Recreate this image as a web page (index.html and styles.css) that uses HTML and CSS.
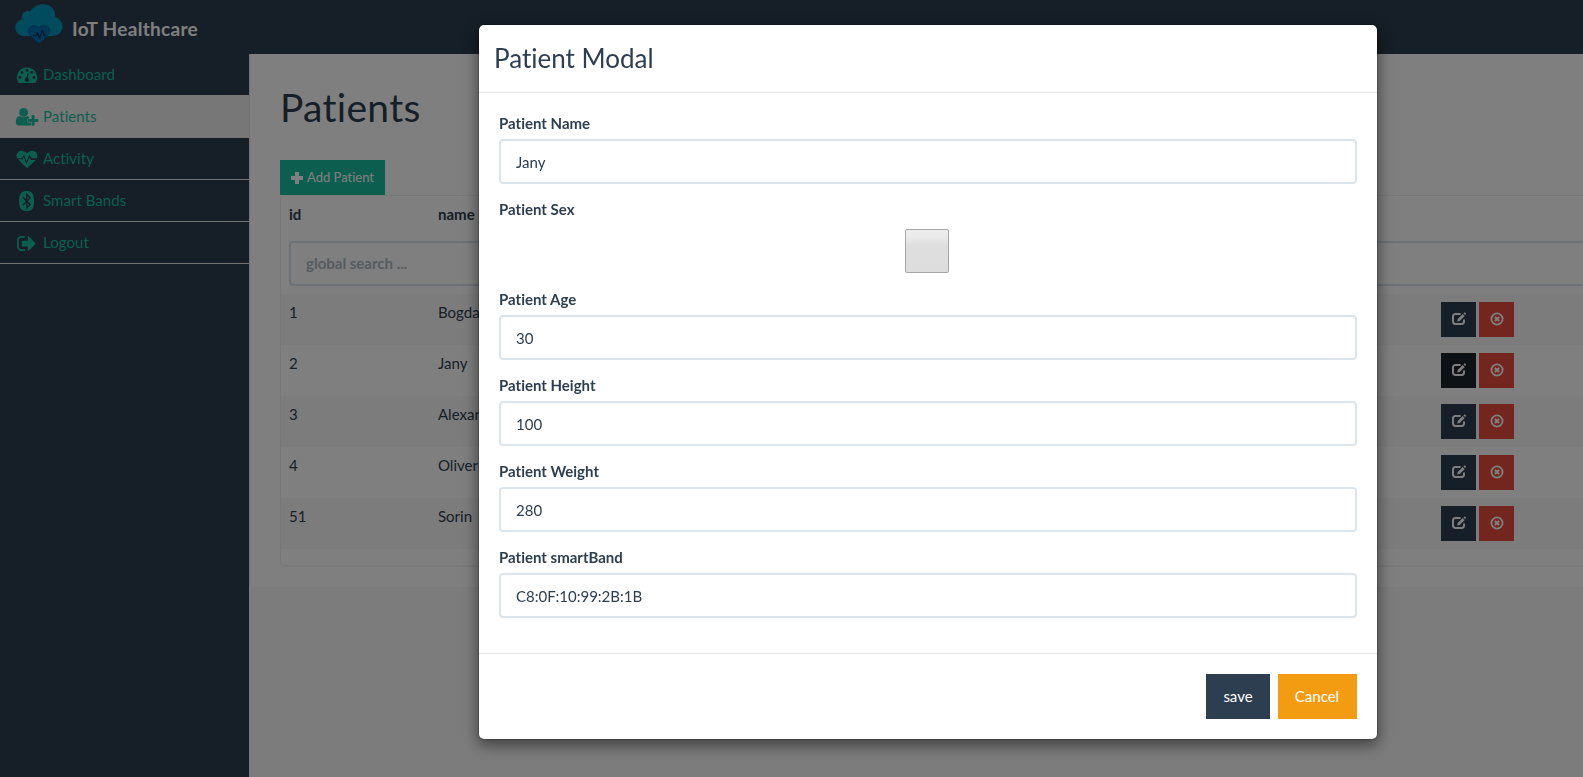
FILE: index.html
```
<!DOCTYPE html>
<html lang="en">
<head>
<meta charset="utf-8">
<title>IoT Healthcare</title>
<link rel="stylesheet" href="styles.css">
</head>
<body>
<svg class="defs" width="0" height="0">
  <symbol id="edit" viewBox="0 0 14 14">
    <path d="M8.600 1.900H3.400A2.400 2.400 0 0 0 1 4.300v5.300A2.400 2.400 0 0 0 3.400 12h6.200A2.400 2.400 0 0 0 12 9.600V7.600" fill="none" stroke="currentColor" stroke-width="2"/>
    <path d="M5.200 9.600l.5-2.500 5-5 2 2-5 5zM11.500 1.400l.9-.9q.3-.3.600 0l1 1q.3.300 0 .6l-.9.900z" fill="currentColor"/>
  </symbol>
  <symbol id="remove" viewBox="0 0 14 14">
    <circle cx="7" cy="7" r="5.600" fill="none" stroke="currentColor" stroke-width="1.800"/>
    <path d="M4.900 4.900l4.200 4.200M9.100 4.900L4.900 9.100" stroke="currentColor" stroke-width="2.100"/>
  </symbol>
</svg>

<header class="topbar">
  <svg class="logo" viewBox="0 0 48 41">
    <path d="M12 32C5 33 .3 28.500.3 23.500.3 19 3.500 16 7 15.500 5.500 10 10 5.500 15.500 7.500 18 2.500 23 .3 28 .3 36 .3 41 6 40.300 13 44.500 14 47.500 18 47.500 22.500 47.500 28.500 42.500 32.500 36 32z" fill="#0097bc"/>
    <path d="M24 39.500L14.900 31.200C11.900 27.500 13.400 22.800 17.200 22 20 21.500 22.600 22.200 24 23.600 25.400 22.200 28 21.500 30.800 22 34.600 22.800 36.100 27.500 33.100 31.200z" fill="#0070b4" stroke="#005c96" stroke-width="1"/>
    <path d="M18 31.500h3l1.500-2.500 2 5 3-7.500 2 5h2" fill="none" stroke="#0a2c48" stroke-width="1.200"/>
  </svg>
  <span class="brand">IoT Healthcare</span>
</header>

<div class="shell">
  <nav class="sidebar">
    <a class="nav-item">
      <svg class="nav-icon" viewBox="0 0 24 24"><path fill-rule="evenodd" d="M12 4.500a10 10 0 0 0-8.700 15q.3.600 1 .6h15.400q.7 0 1-.6A10 10 0 0 0 12 4.500zM5 13a1.400 1.400 0 1 0 0 2.800A1.400 1.400 0 0 0 5 13zM7.100 8a1.400 1.400 0 1 0 0 2.800A1.400 1.400 0 0 0 7.100 8zM12 5.900a1.400 1.400 0 1 0 0 2.800 1.400 1.400 0 0 0 0-2.800zM16.900 8a1.400 1.400 0 1 0 0 2.800 1.400 1.400 0 0 0 0-2.800zM19 13a1.400 1.400 0 1 0 0 2.800 1.400 1.400 0 0 0 0-2.800zM12.500 9.900l-.9 4.700a2.100 2.100 0 1 0 1.300.2l.9-4.600z"/></svg>
      Dashboard
    </a>
    <a class="nav-item active">
      <svg class="nav-icon" viewBox="0 0 24 24"><circle cx="8.600" cy="7.400" r="4.400"/><path d="M5 10.900Q8.600 13.800 12.200 10.900 13.500 11 14.300 12.200V17.200h3.200V20Q16.500 20.400 15.300 20.400H3.600Q.8 20.400.8 17.300.8 11.200 5 10.900z"/><path d="M16.700 10.300h2.900v3.700h3.700v2.900h-3.700v3.700h-2.900v-3.700H13V14h3.700z" class="plus"/></svg>
      Patients
    </a>
    <a class="nav-item">
      <svg class="nav-icon" viewBox="0 0 24 24"><path d="M3 12.300h4.600L8.800 9.700l2.700 7.900 2.900-7.200 1.300 2.700H21L12 21.300zM2 11.300C.4 6.200 4 3.200 8 3.900c2 .4 3.300 1.500 4 2.500.7-1 2-2.100 4-2.500 4-.7 7.600 2.300 6 7.400h-5.500L14.300 7.700l-2.700 6.700L9 7.500l-2.200 3.800z"/></svg>
      Activity
    </a>
    <a class="nav-item">
      <svg class="nav-icon" viewBox="-72 -51 614 614"><path d="M292.600 171.100L249.700 214l-.3-86 43.200 43.100m-43.200 219.800l43.100-43.100-42.900-42.900-.2 86zM416 259.400C416 465 344.100 512 230.900 512S32 465 32 259.400 115.400 0 228.600 0 416 53.900 416 259.400zm-158.500 0l79.400-88.600L211.800 36.500v176.900L138 139.600l-27 26.900 92.700 93-92.700 93 26.900 26.900 73.800-73.800 2.300 170 127.400-127.500-83.900-88.700z"/></svg>
      Smart Bands
    </a>
    <a class="nav-item">
      <svg class="nav-icon" viewBox="0 0 24 24"><path d="M9.800 5.900H6.300A3.300 3.300 0 0 0 3 9.200v6.600a3.300 3.300 0 0 0 3.300 3.300h3.500" fill="none" stroke="currentColor" stroke-width="1.700"/><path d="M6.800 9.700h6V5.800q.5-.8 1.200-.2l6.300 6.400q.5.600 0 1.200L14 19.400q-.8.500-1.200-.3v-3.600h-6z"/></svg>
      Logout
    </a>
  </nav>

  <main class="content">
    <h1>Patients</h1>
    <button class="btn-add"><svg viewBox="0 0 12 12"><path d="M4 0h4v4h4v4H8v4H4V8H0V4h4z" fill="currentColor"/></svg>Add Patient</button>
    <section class="panel">
      <div class="row head"><span>id</span><span>name</span><span></span></div>
      <div class="search-row"><input class="field search" placeholder="global search ..."></div>
      <div class="row"><span>1</span><span>Bogdan</span><span class="actions"><button class="edit"><svg><use href="#edit"/></svg></button><button class="remove"><svg><use href="#remove"/></svg></button></span></div>
      <div class="row"><span>2</span><span>Jany</span><span class="actions"><button class="edit current"><svg><use href="#edit"/></svg></button><button class="remove"><svg><use href="#remove"/></svg></button></span></div>
      <div class="row"><span>3</span><span>Alexandru</span><span class="actions"><button class="edit"><svg><use href="#edit"/></svg></button><button class="remove"><svg><use href="#remove"/></svg></button></span></div>
      <div class="row"><span>4</span><span>Oliver</span><span class="actions"><button class="edit"><svg><use href="#edit"/></svg></button><button class="remove"><svg><use href="#remove"/></svg></button></span></div>
      <div class="row"><span>51</span><span>Sorin</span><span class="actions"><button class="edit"><svg><use href="#edit"/></svg></button><button class="remove"><svg><use href="#remove"/></svg></button></span></div>
    </section>
  </main>
</div>

<div class="backdrop"></div>
<div class="modal">
  <div class="modal-header"><h4>Patient Modal</h4></div>
  <div class="modal-body">
    <div class="group"><label>Patient Name</label><input class="field" value="Jany"></div>
    <div class="group"><label>Patient Sex</label><div class="check"></div></div>
    <div class="group"><label>Patient Age</label><input class="field" value="30"></div>
    <div class="group"><label>Patient Height</label><input class="field" value="100"></div>
    <div class="group"><label>Patient Weight</label><input class="field" value="280"></div>
    <div class="group"><label>Patient smartBand</label><input class="field" value="C8:0F:10:99:2B:1B"></div>
  </div>
  <div class="modal-footer"><button class="btn save">save</button><button class="btn cancel">Cancel</button></div>
</div>
</body>
</html>
```
FILE: styles.css
```
* { box-sizing: border-box; }
html, body { height: 100%; overflow: hidden; }
body {
  margin: 0;
  display: flex;
  flex-direction: column;
  font: 15px/21px Lato, sans-serif;
  font-variant-ligatures: none;
  color: #2c3e50;
  background: #f8f8f8;
}
button, input { font: inherit; font-variant-ligatures: none; }
button { border: 0; padding: 0; color: #fff; }
.defs { position: absolute; }

.topbar {
  flex: none;
  display: flex;
  height: 54px;
  padding: 4px 0 0 15px;
  background: #2c3e50;
}
.logo { width: 48px; height: 41px; }
.brand {
  margin: 10px 0 0 9px;
  font-size: 19px;
  line-height: 30px;
  font-weight: 700;
  letter-spacing: .3px;
  color: #fff;
}

.shell { flex: 1; display: flex; min-height: 0; overflow: hidden; }
.sidebar { flex: none; width: 249px; background: #2c3e50; }
.nav-item {
  display: flex;
  align-items: center;
  gap: 4px;
  height: 42px;
  padding-left: 15px;
  border-bottom: 1px solid #e7e7e7;
  color: #18bc9c;
  letter-spacing: .05px;
}
.nav-item:first-child { border-color: #eee; }
.nav-item.active { background: #eee; }
.nav-icon { width: 24px; height: 24px; margin-top: 1px; fill: currentColor; }
.plus { stroke: #eee; stroke-width: 1; paint-order: stroke; }

.content {
  flex: none;
  align-self: flex-start;
  width: 1500px;
  height: 533px;
  padding: 32px 30px 0;
  background: #fff;
  border-left: 1px solid #e7e7e7;
}
h1 { margin: 0 0 31px; font-size: 39px; line-height: 43px; font-weight: 400; letter-spacing: .3px; }
.btn-add {
  display: flex;
  align-items: center;
  gap: 4px;
  width: 105px;
  height: 35px;
  padding-left: 11px;
  background: #18bc9c;
  font-size: 13px;
}
.btn-add svg { width: 12px; height: 12px; }
.panel {
  height: 371px;
  border: 1px solid #ecf0f1;
  border-radius: 4px;
  box-shadow: 0 1px 1px rgba(0, 0, 0, .05);
}
.row {
  display: grid;
  grid-template-columns: 149px 1011px 1fr;
  height: 51px;
  padding: 8px;
}
.row:nth-child(odd) { background: #f9f9f9; }
.row.head { height: 37px; font-weight: 700; background: none; }
.search-row { height: 61px; padding: 8px; }
.actions { display: flex; gap: 3px; margin-left: -8px; }
.actions button {
  display: grid;
  place-content: start;
  width: 35px;
  height: 35px;
  padding: 10px 0 0 10.5px;
}
.actions svg { width: 14px; height: 14px; display: block; }
.edit { background: #2c3e50; }
.edit.current { background: #1a242f; }
.remove { background: #e74c3c; }

.field {
  display: block;
  width: 100%;
  height: 45px;
  padding: 10px 15px;
  border: 2px solid #dce4ec;
  border-radius: 4px;
  background: #fff;
  color: #2c3e50;
  outline: 0;
}
.search { font-weight: 700; padding: 9px 15px 11px; }
.search::placeholder { color: #acb6c0; opacity: 1; }

.backdrop { position: fixed; inset: 0; background: rgba(0, 0, 0, .5); }
.modal {
  position: fixed;
  top: 24px;
  left: 478px;
  width: 900px;
  background: #fff;
  background-clip: padding-box;
  border: 1px solid rgba(0, 0, 0, .2);
  border-radius: 6px;
  box-shadow: 0 5px 15px rgba(0, 0, 0, .5);
}
.modal-header { padding: 15px; border-bottom: 1px solid #e5e5e5; }
h4 { margin: 0; font-size: 26px; line-height: 37px; font-weight: 400; }
.modal-body { padding: 20px; }
.group { margin-bottom: 15px; }
label { display: block; margin-bottom: 5px; font-weight: 700; }
.check {
  width: 44px;
  height: 44px;
  margin: 9px 0 16px 406px;
  border: 1px solid #a6a6a6;
  border-radius: 2px;
  background: linear-gradient(#ededed, #eaeaea 18%, #dedede 38%, #ddd);
}
.modal-footer {
  display: flex;
  justify-content: flex-end;
  gap: 8px;
  padding: 20px;
  border-top: 1px solid #e5e5e5;
}
.btn { height: 45px; }
.save { width: 64px; background: #2c3e50; }
.cancel { width: 79px; padding-right: 1px; background: #f39c12; }
```
